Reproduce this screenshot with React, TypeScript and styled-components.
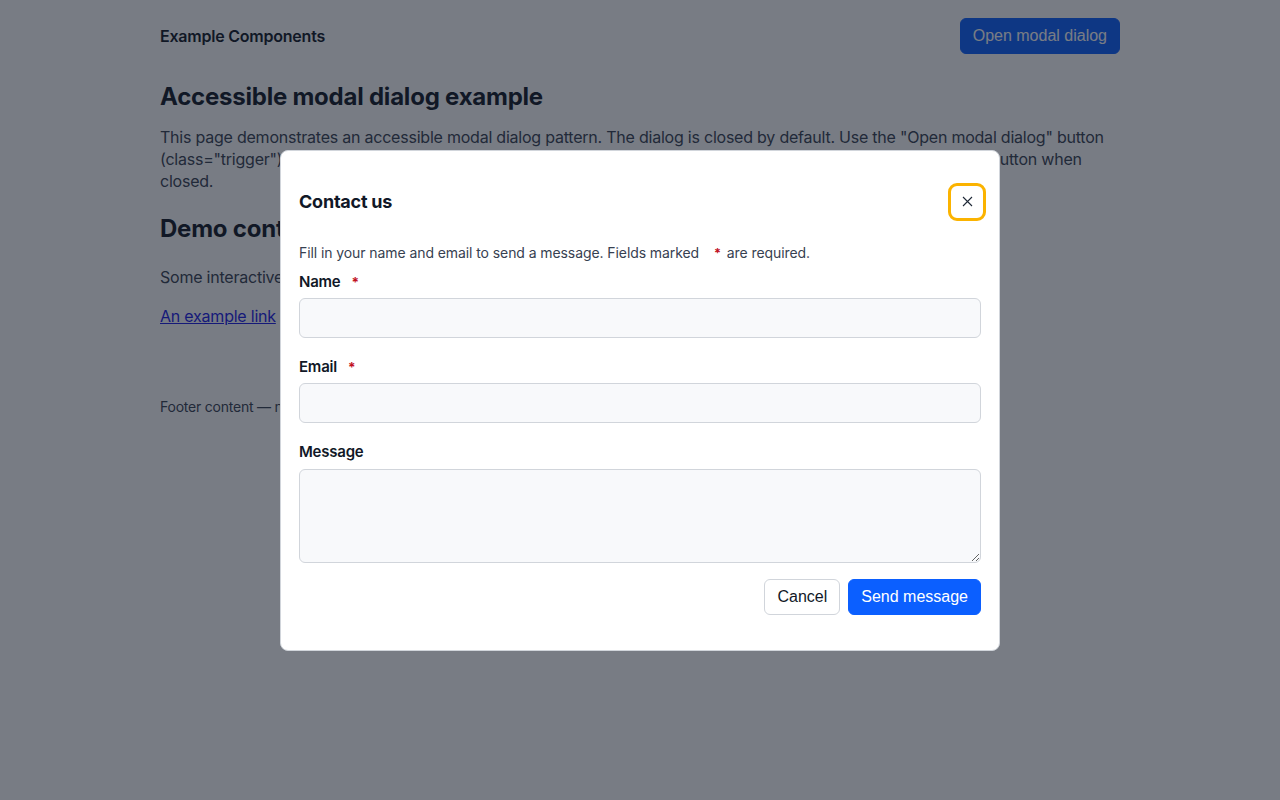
import styled, { createGlobalStyle } from 'styled-components';

const GlobalStyle = createGlobalStyle`
  html, body {
    margin: 0;
    padding: 0;
    background: #ffffff;
    font-family: Inter, 'Noto Sans', sans-serif;
    letter-spacing: -0.014em;
    color: #111827;
  }
  * {
    box-sizing: border-box;
  }
`;

const Page = styled.div`
  width: 960px;
  margin: 0 auto;
  min-height: 800px;
`;

const Header = styled.header`
  display: flex;
  justify-content: space-between;
  align-items: center;
  padding: 18px 0;
`;

const Brand = styled.div`
  font-size: 16px;
  font-weight: 600;
  color: #111827;
`;

const Button = styled.button<{ variant?: 'primary' | 'secondary' }>`
  height: 36px;
  padding: 0 12px;
  border-radius: 6px;
  font-family: 'Liberation Sans', Arial, sans-serif;
  font-size: 16px;
  letter-spacing: 0;
  cursor: pointer;
  border: 1px solid ${(p) => (p.variant === 'secondary' ? '#d1d5db' : '#0b5fff')};
  background: ${(p) => (p.variant === 'secondary' ? '#ffffff' : '#0b5fff')};
  color: ${(p) => (p.variant === 'secondary' ? '#111827' : '#ffffff')};
`;

const Main = styled.main`
  padding-top: 10px;
`;

const Heading = styled.h2<{ gap?: number }>`
  margin: ${(p) => p.gap ?? 0}px 0 0;
  font-size: 24px;
  line-height: 30px;
  font-weight: 700;
  color: #111827;
`;

const Text = styled.p<{ gap?: number }>`
  margin: ${(p) => p.gap ?? 0}px 0 0;
  font-size: 16px;
  line-height: 22px;
  color: #374151;
`;

const Link = styled.a`
  color: #1a1ae6;
  text-decoration: underline;
`;

const Footer = styled.footer`
  margin-top: 70px;
  font-size: 14px;
  line-height: 20px;
  color: #374151;
`;

const Backdrop = styled.div`
  position: fixed;
  inset: 0;
  background: rgba(17, 24, 39, 0.57);
  display: flex;
  align-items: center;
  justify-content: center;
`;

const Dialog = styled.div`
  width: 720px;
  background: #ffffff;
  border: 1px solid #d1d5db;
  border-radius: 8px;
  padding: 32px 18px 35px;
  display: flex;
  flex-direction: column;
`;

const DialogHeader = styled.div`
  display: flex;
  justify-content: space-between;
  align-items: center;
  height: 38px;
`;

const DialogTitle = styled.h3`
  margin: 0;
  font-size: 18px;
  line-height: 24px;
  font-weight: 700;
  color: #111827;
`;

const CloseButton = styled.button`
  width: 38px;
  height: 38px;
  margin-right: -5px;
  display: flex;
  align-items: center;
  justify-content: center;
  background: #ffffff;
  border: 3px solid #fbb300;
  border-radius: 9px;
  padding: 0;
  color: #1f2937;
  cursor: pointer;
`;

const Description = styled.p`
  margin: 22px 0 0;
  font-size: 14px;
  line-height: 20px;
  letter-spacing: -0.006em;
  color: #374151;
`;

const Required = styled.span`
  color: #c1121f;
  font-weight: 700;
  font-size: 0.9em;
  margin: 0 2px 0 11px;
`;

const Field = styled.div<{ gap: number }>`
  display: flex;
  flex-direction: column;
  margin-top: ${(p) => p.gap}px;
`;

const Label = styled.label<{ space?: number }>`
  font-size: 15px;
  line-height: 20px;
  font-weight: 600;
  color: #111827;
  margin-bottom: ${(p) => p.space ?? 6}px;
`;

const Input = styled.input`
  height: 40px;
  width: 100%;
  background: #f8f9fb;
  border: 1px solid #d1d5db;
  border-radius: 6px;
  padding: 0 10px;
  font-family: Inter, sans-serif;
  font-size: 15px;
`;

const TextArea = styled.textarea`
  height: 94px;
  width: 100%;
  background: #f8f9fb;
  border: 1px solid #d1d5db;
  border-radius: 6px;
  padding: 8px 10px;
  font-family: Inter, sans-serif;
  font-size: 15px;
  resize: vertical;
`;

const Actions = styled.div`
  display: flex;
  justify-content: flex-end;
  gap: 8px;
  margin-top: 16px;
`;

export default function App() {
  return (
    <>
      <GlobalStyle />
      <Page>
        <Header>
          <Brand>Example Components</Brand>
          <Button className="trigger">Open modal dialog</Button>
        </Header>
        <Main>
          <Heading>Accessible modal dialog example</Heading>
          <Text gap={14}>
            This page demonstrates an accessible modal dialog pattern. The dialog is closed by default. Use the "Open
            modal dialog" button (class="trigger") to open it. While open, keyboard focus is trapped inside the dialog
            and is returned to the trigger button when closed.
          </Text>
          <Heading gap={22}>Demo content</Heading>
          <Text gap={22}>Some interactive elements to check focus order behind the dialog.</Text>
          <Text gap={17}>
            <Link href="#">An example link</Link>
          </Text>
        </Main>
        <Footer>Footer content — not reachable while the dialog is open.</Footer>
      </Page>

      <Backdrop>
        <Dialog role="dialog" aria-modal="true" aria-labelledby="dialog-title">
          <DialogHeader>
            <DialogTitle id="dialog-title">Contact us</DialogTitle>
            <CloseButton aria-label="Close dialog">
              <svg width="11" height="11" viewBox="0 0 11 11" fill="none" stroke="currentColor" strokeWidth="1.1">
                <path d="M1 1L10 10M10 1L1 10" />
              </svg>
            </CloseButton>
          </DialogHeader>
          <Description>
            Fill in your name and email to send a message. Fields marked <Required>*</Required> are required.
          </Description>
          <Field gap={8}>
            <Label htmlFor="name">
              Name<Required>*</Required>
            </Label>
            <Input id="name" type="text" />
          </Field>
          <Field gap={19}>
            <Label htmlFor="email">
              Email<Required>*</Required>
            </Label>
            <Input id="email" type="email" />
          </Field>
          <Field gap={19}>
            <Label htmlFor="message" space={7}>
              Message
            </Label>
            <TextArea id="message" />
          </Field>
          <Actions>
            <Button variant="secondary">Cancel</Button>
            <Button>Send message</Button>
          </Actions>
        </Dialog>
      </Backdrop>
    </>
  );
}
